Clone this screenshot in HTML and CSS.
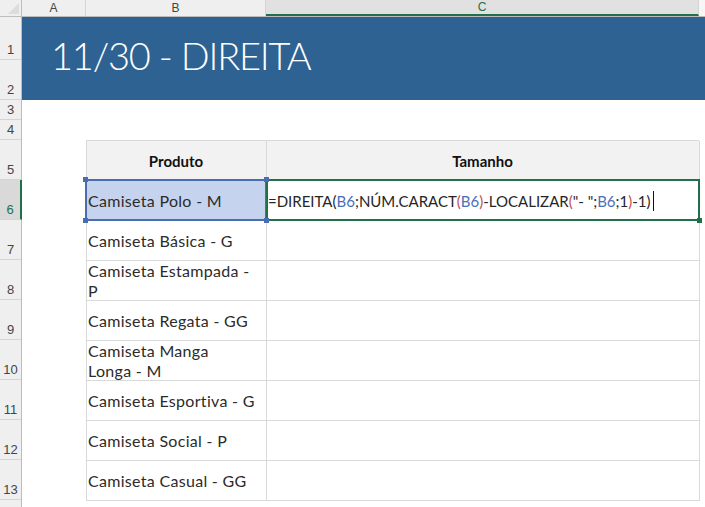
FILE: index.html
```html
<!DOCTYPE html>
<html lang="pt-BR">

<head>
  <meta charset="UTF-8">
  <meta name="viewport" content="width=device-width, initial-scale=1.0">
  <title>11/30 - DIREITA</title>
  <link rel="stylesheet" href="styles.css">
</head>

<body>
  <div class="sheet">
    <div class="corner"><span class="corner-mark"></span></div>

    <div class="col-heads">
      <div class="col-head col-a">A</div>
      <div class="col-head col-b">B</div>
      <div class="col-head col-c is-active">C</div>
      <div class="col-head col-d"></div>
    </div>

    <div class="row-heads">
      <div class="row-head row-1">1</div>
      <div class="row-head row-2">2</div>
      <div class="row-head row-short">3</div>
      <div class="row-head row-short">4</div>
      <div class="row-head">5</div>
      <div class="row-head is-active">6</div>
      <div class="row-head">7</div>
      <div class="row-head">8</div>
      <div class="row-head">9</div>
      <div class="row-head">10</div>
      <div class="row-head">11</div>
      <div class="row-head">12</div>
      <div class="row-head">13</div>
      <div class="row-head row-rest"></div>
    </div>

    <div class="cells">
      <div class="banner">
        <h1 class="banner-title">11/30 - DIREITA</h1>
      </div>

      <div class="gap-rows"></div>

      <div class="table">
        <div class="cell head">Produto</div>
        <div class="cell head">Tamanho</div>

        <div class="cell is-selected">
          Camiseta Polo - M
          <span class="handle handle-tl"></span>
          <span class="handle handle-tr"></span>
          <span class="handle handle-bl"></span>
          <span class="handle handle-br"></span>
        </div>
        <div class="cell is-editing">
          <span class="formula">=DIREITA(<span class="ref">B6</span>;NÚM.CARACT<span class="paren">(</span><span class="ref">B6</span><span class="paren">)</span>-LOCALIZAR<span class="paren">(</span>"- ";<span class="ref">B6</span>;1<span class="paren">)</span>-1)</span><span class="caret"></span>
          <span class="fill-handle"></span>
        </div>

        <div class="cell">Camiseta Básica - G</div>
        <div class="cell"></div>

        <div class="cell">Camiseta Estampada -<br>P</div>
        <div class="cell"></div>

        <div class="cell">Camiseta Regata - GG</div>
        <div class="cell"></div>

        <div class="cell">Camiseta Manga<br>Longa - M</div>
        <div class="cell"></div>

        <div class="cell">Camiseta Esportiva - G</div>
        <div class="cell"></div>

        <div class="cell">Camiseta Social - P</div>
        <div class="cell"></div>

        <div class="cell">Camiseta Casual - GG</div>
        <div class="cell"></div>
      </div>
    </div>
  </div>
</body>

</html>
```

FILE: styles.css
```css
:root {
  --head-bg: #efefef;
  --head-line: #d4d4d4;
  --grid-line: #d9d9d9;
  --excel-green: #21704a;
  --banner: #2e6292;
  --select-blue: #4a6db0;
}

* {
  padding: 0;
  margin: 0;
  box-sizing: border-box;
}

body {
  background: #fff;
  font-family: "Lato", "Liberation Sans", sans-serif;
  overflow: hidden;
}

.sheet {
  display: grid;
  grid-template-columns: 22px 1fr;
  grid-template-rows: 17px 1fr;
  width: 705px;
  height: 507px;
}

/* cabeçalhos */
.corner {
  position: relative;
  background: var(--head-bg);
  border-right: 1px solid #bdbdbd;
  border-bottom: 1px solid #bdbdbd;
}

.corner-mark {
  position: absolute;
  right: 2px;
  bottom: 2px;
  width: 0;
  height: 0;
  border-left: 11px solid transparent;
  border-bottom: 11px solid #dcdcdc;
}

.col-heads {
  display: flex;
  border-bottom: 1px solid #bdbdbd;
}

.col-head {
  display: flex;
  align-items: center;
  justify-content: center;
  height: 16px;
  background: var(--head-bg);
  border-right: 1px solid var(--head-line);
  font-family: "Liberation Sans", sans-serif;
  font-size: 12px;
  color: #444;
}

.col-a { width: 64px; }
.col-b { width: 180px; }
.col-c { width: 433px; }
.col-d { flex: 1; border-right: 0; background: #f6f6f6; }

.col-head.is-active {
  background: #e1e1e1;
  color: var(--excel-green);
  border-bottom: 2px solid var(--excel-green);
}

.row-heads {
  display: flex;
  flex-direction: column;
  border-right: 1px solid #bdbdbd;
}

.row-head {
  display: flex;
  align-items: flex-end;
  justify-content: center;
  height: 40px;
  padding-bottom: 2px;
  background: var(--head-bg);
  border-bottom: 1px solid var(--head-line);
  font-family: "Liberation Sans", sans-serif;
  font-size: 13px;
  line-height: 15px;
  color: #444;
}

.row-1 { height: 43px; }
.row-short { height: 20px; }
.row-rest { flex: 1; border-bottom: 0; }

.row-head.is-active {
  background: #d9d9d9;
  color: var(--excel-green);
  border-right: 2px solid var(--excel-green);
  margin-right: -1px;
}

/* área de células */
.cells {
  display: flex;
  flex-direction: column;
}

.banner {
  display: flex;
  align-items: center;
  height: 83px;
  padding-left: 29px;
  padding-bottom: 7px;
  background: var(--banner);
}

.banner-title {
  font-family: "Lato", sans-serif;
  font-weight: 300;
  font-size: 38px;
  color: #fff;
  letter-spacing: -1.2px;
}

.gap-rows {
  height: 40px;
}

.table {
  display: grid;
  grid-template-columns: 180px 433px;
  grid-auto-rows: 40px;
  margin-left: 64px;
  width: 613px;
  border-top: 1px solid var(--grid-line);
  border-left: 1px solid var(--grid-line);
}

.cell {
  position: relative;
  display: flex;
  align-items: center;
  padding: 0 2px 0 1px;
  border-right: 1px solid var(--grid-line);
  border-bottom: 1px solid var(--grid-line);
  font-size: 16px;
  letter-spacing: 0.3px;
  line-height: 20px;
  color: #2b2b2b;
}

.cell.head {
  justify-content: center;
  background: #f2f2f2;
  font-size: 15px;
  font-weight: 700;
  letter-spacing: 0;
  color: #111;
}

.cell.is-selected {
  background: #c6d3ee;
}

.cell.is-selected::after {
  content: "";
  position: absolute;
  inset: -2px -1px -1px -2px;
  border: 2px solid var(--select-blue);
}

.handle {
  position: absolute;
  z-index: 1;
  width: 5px;
  height: 5px;
  background: var(--select-blue);
}

.handle-tl { top: -4px; left: -4px; }
.handle-tr { top: -4px; right: -3px; }
.handle-bl { bottom: -3px; left: -4px; }
.handle-br { bottom: -3px; right: -3px; }

.cell.is-editing::after {
  content: "";
  position: absolute;
  inset: -2px -1px -1px -1px;
  border: 2px solid var(--excel-green);
}

.fill-handle {
  position: absolute;
  z-index: 1;
  right: -3px;
  bottom: -3px;
  width: 5px;
  height: 5px;
  background: var(--excel-green);
}

.formula {
  white-space: nowrap;
  font-size: 15px;
  letter-spacing: 0;
  color: #262626;
}

.formula .ref {
  color: #4a70b8;
}

.formula .paren {
  color: #c0504d;
}

.caret {
  display: inline-block;
  width: 1px;
  height: 20px;
  margin-left: 2px;
  background: #111;
}
```
